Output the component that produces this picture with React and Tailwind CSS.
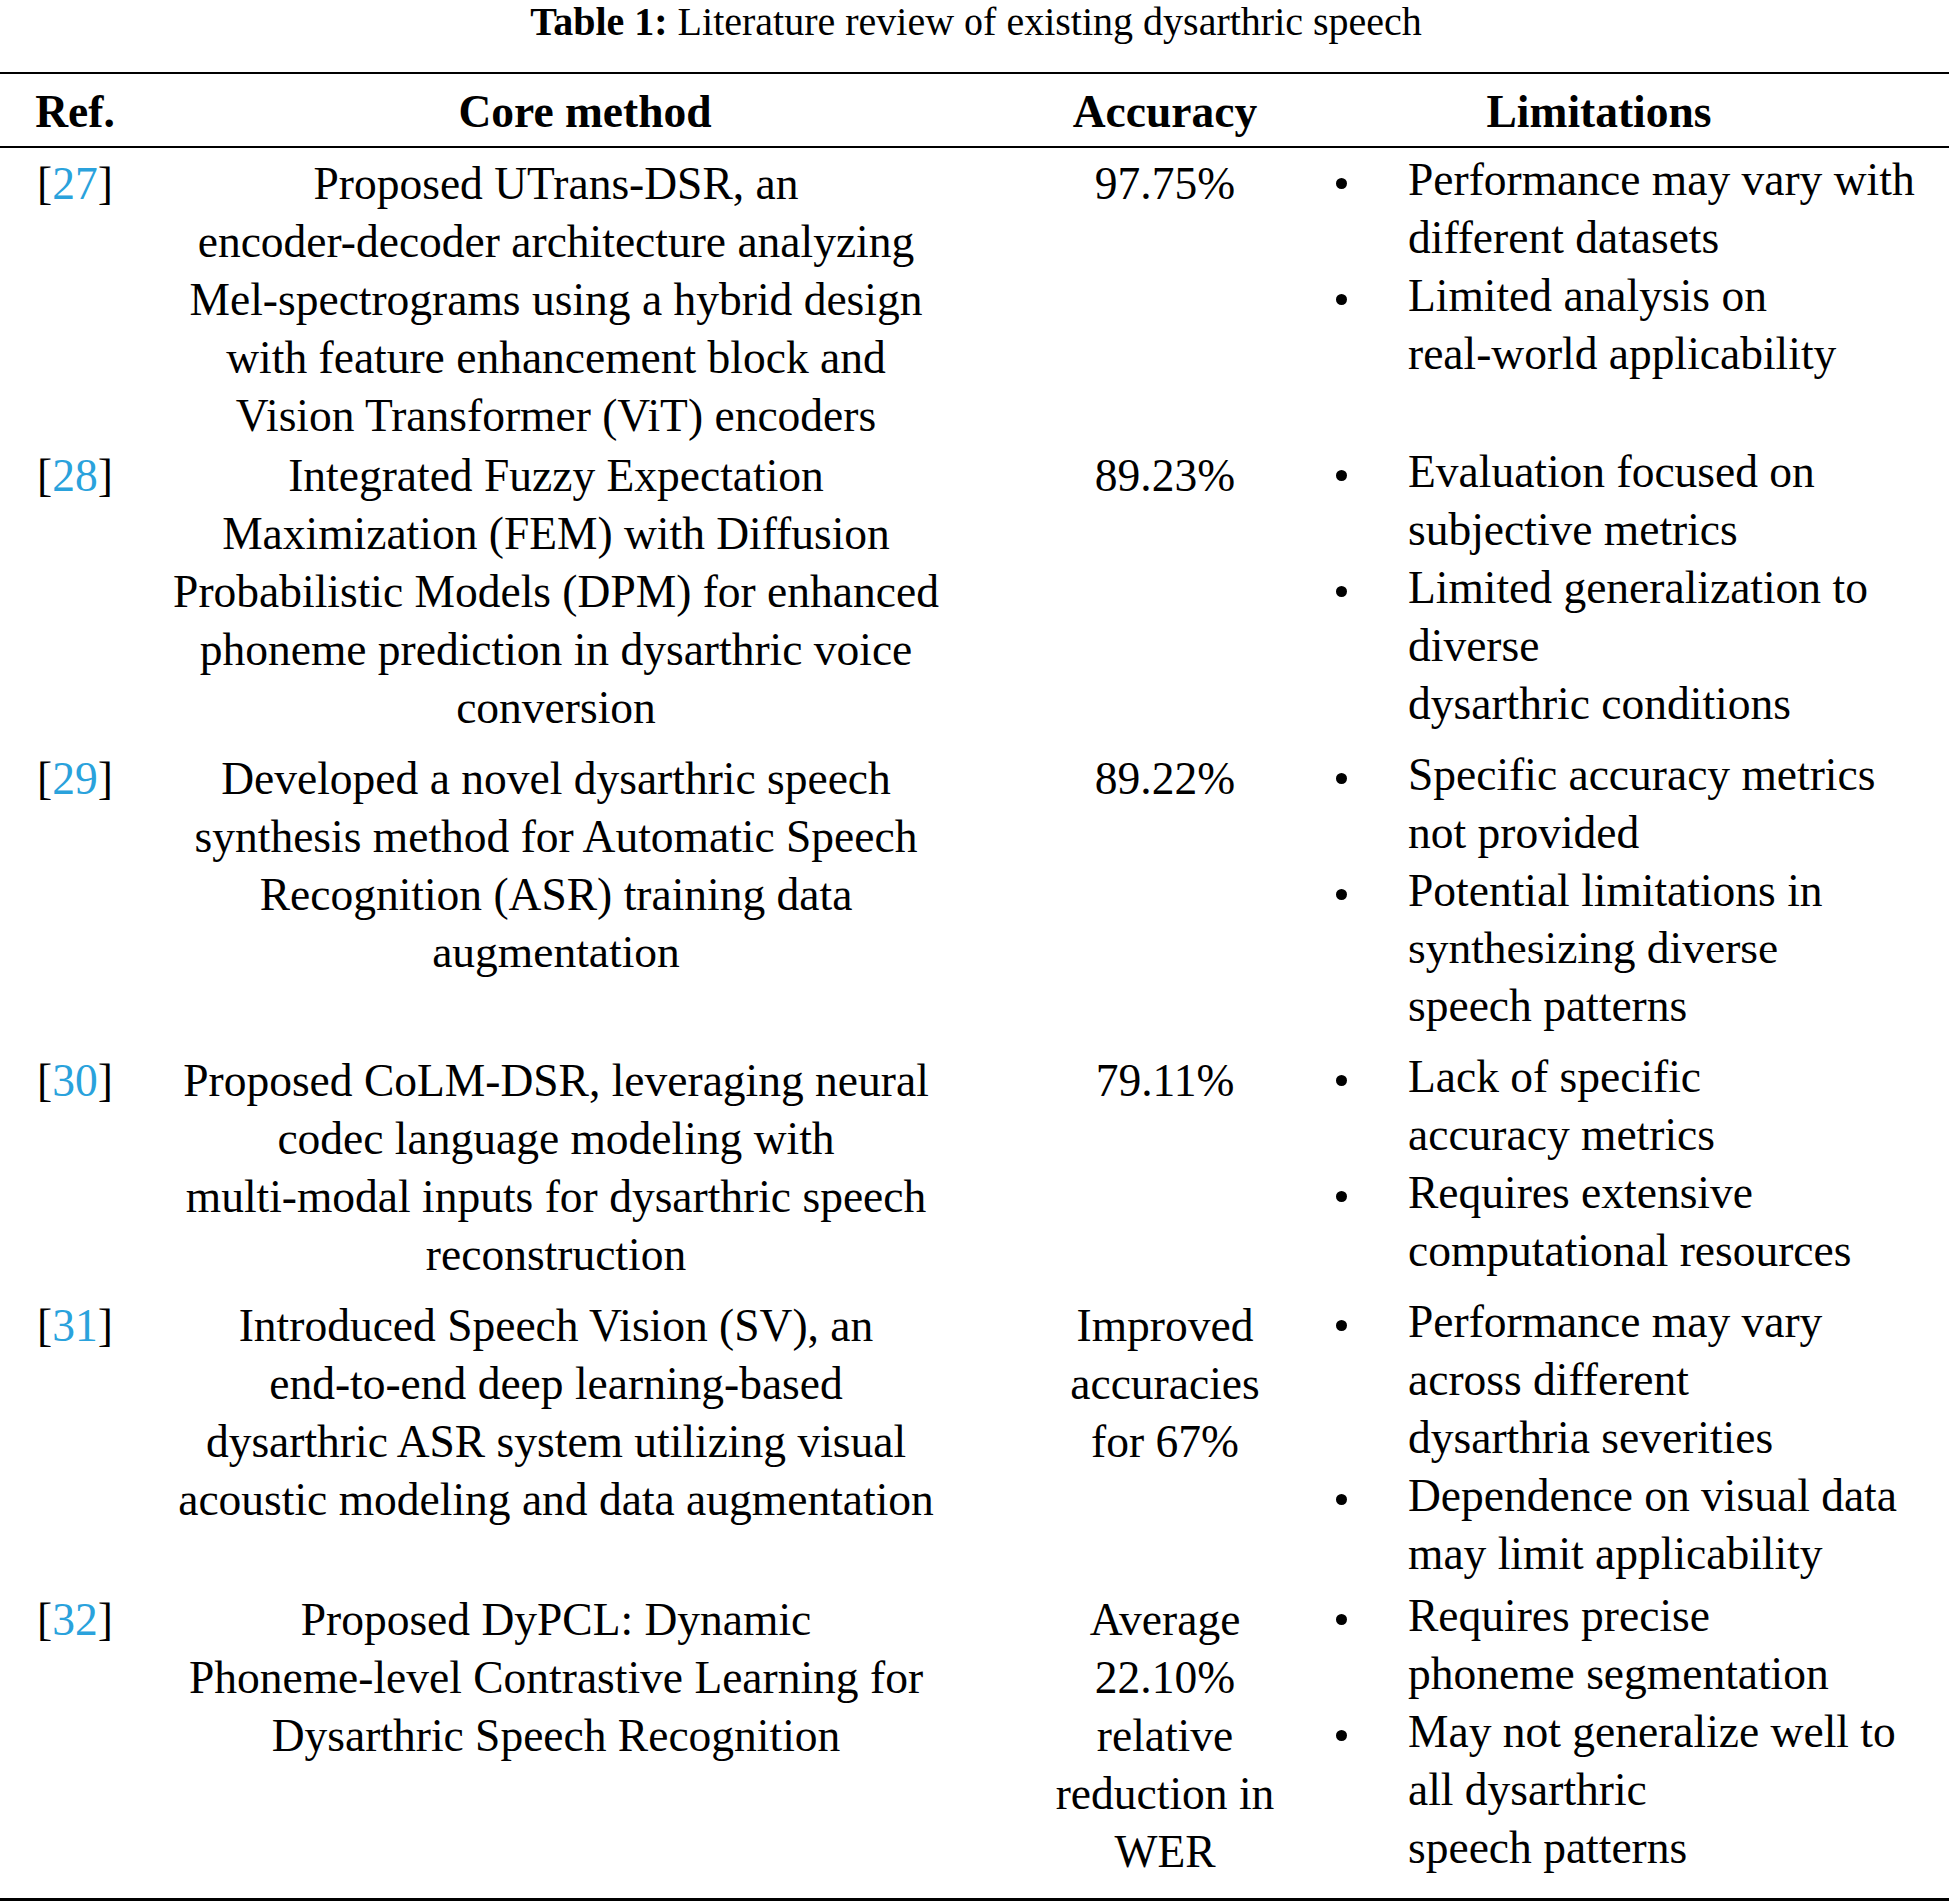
import React from 'react';

const rows = [
  {
    ref: '27',
    core: [
      'Proposed UTrans-DSR, an',
      'encoder-decoder architecture analyzing',
      'Mel-spectrograms using a hybrid design',
      'with feature enhancement block and',
      'Vision Transformer (ViT) encoders',
    ],
    acc: ['97.75%'],
    lim: [
      ['Performance may vary with', 'different datasets'],
      ['Limited analysis on', 'real-world applicability'],
    ],
    pb: 'pb-[2px]',
  },
  {
    ref: '28',
    core: [
      'Integrated Fuzzy Expectation',
      'Maximization (FEM) with Diffusion',
      'Probabilistic Models (DPM) for enhanced',
      'phoneme prediction in dysarthric voice',
      'conversion',
    ],
    acc: ['89.23%'],
    lim: [
      ['Evaluation focused on', 'subjective metrics'],
      ['Limited generalization to', 'diverse', 'dysarthric conditions'],
    ],
    pb: 'pb-[13px]',
  },
  {
    ref: '29',
    core: [
      'Developed a novel dysarthric speech',
      'synthesis method for Automatic Speech',
      'Recognition (ASR) training data',
      'augmentation',
    ],
    acc: ['89.22%'],
    lim: [
      ['Specific accuracy metrics', 'not provided'],
      ['Potential limitations in', 'synthesizing diverse', 'speech patterns'],
    ],
    pb: 'pb-[13px]',
  },
  {
    ref: '30',
    core: [
      'Proposed CoLM-DSR, leveraging neural',
      'codec language modeling with',
      'multi-modal inputs for dysarthric speech',
      'reconstruction',
    ],
    acc: ['79.11%'],
    lim: [
      ['Lack of specific', 'accuracy metrics'],
      ['Requires extensive', 'computational resources'],
    ],
    pb: 'pb-[13px]',
  },
  {
    ref: '31',
    core: [
      'Introduced Speech Vision (SV), an',
      'end-to-end deep learning-based',
      'dysarthric ASR system utilizing visual',
      'acoustic modeling and data augmentation',
    ],
    acc: ['Improved', 'accuracies', 'for 67%'],
    lim: [
      ['Performance may vary', 'across different', 'dysarthria severities'],
      ['Dependence on visual data', 'may limit applicability'],
    ],
    pb: 'pb-[4px]',
  },
  {
    ref: '32',
    core: [
      'Proposed DyPCL: Dynamic',
      'Phoneme-level Contrastive Learning for',
      'Dysarthric Speech Recognition',
    ],
    acc: ['Average', '22.10%', 'relative', 'reduction in', 'WER'],
    lim: [
      ['Requires precise', 'phoneme segmentation'],
      ['May not generalize well to', 'all dysarthric', 'speech patterns'],
    ],
    pb: 'pb-0',
  },
];

const Lines = ({ lines }) => (
  <>
    {lines.map((l, i) => (
      <div key={i} className="whitespace-nowrap">{l}</div>
    ))}
  </>
);

export default function App() {
  return (
    <div className="w-[1953px] bg-white text-black font-['Liberation_Serif',serif]">
      {/* caption */}
      <p className="text-center text-[40px] leading-[44px] whitespace-nowrap">
        <span className="font-bold">Table 1:</span> Literature review of existing dysarthric speech
      </p>

      <div className="mt-[28px] mr-[3px] h-[2px] bg-black" />

      {/* header */}
      <div className="grid grid-cols-[150px_812px_330px_1fr] pt-[9px] pb-[5px] text-[45.5px] leading-[58px] font-bold">
        <div className="text-center">Ref.</div>
        <div className="pl-[58px] text-center">Core method</div>
        <div className="pl-[78px] text-center">Accuracy</div>
        <div className="pr-[45px] text-center">Limitations</div>
      </div>

      <div className="mr-[3px] h-[2px] bg-black" />

      {/* body */}
      <div className="pt-[7px] pb-[17px] text-[45.5px] leading-[58px]">
        {rows.map((r) => (
          <div key={r.ref} className={`grid grid-cols-[150px_812px_330px_1fr] items-start ${r.pb}`}>
            <div className="text-center">
              [<span className="text-[#2aa2dc]">{r.ref}</span>]
            </div>
            <div className="text-center">
              <Lines lines={r.core} />
            </div>
            <div className="pl-[78px] text-center">
              <Lines lines={r.acc} />
            </div>
            <div className="-translate-y-[4px]">
              {r.lim.map((item, i) => (
                <div key={i} className="flex items-start">
                  <div className="w-[117px] h-[58px] pl-[45px] pt-[6px] flex items-center shrink-0">
                    <div className="w-[11px] h-[11px] rounded-full bg-black" />
                  </div>
                  <div>
                    <Lines lines={item} />
                  </div>
                </div>
              ))}
            </div>
          </div>
        ))}
      </div>

      <div className="mr-[3px] h-[3px] bg-black" />
    </div>
  );
}
